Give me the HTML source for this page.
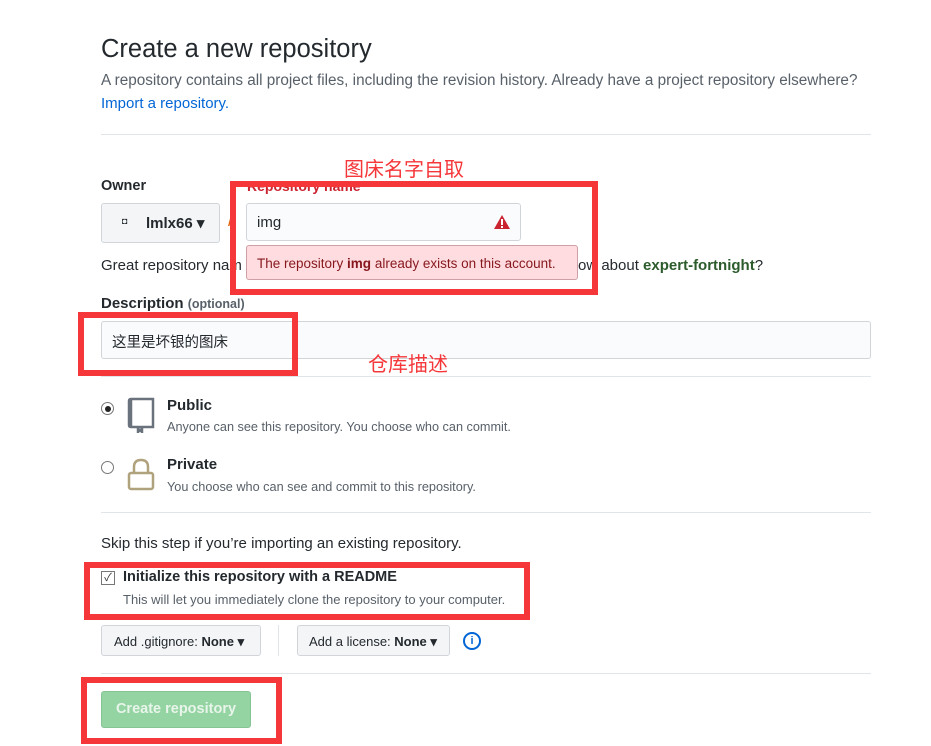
<!DOCTYPE html>
<html><head><meta charset="utf-8"><style>
body{margin:0;width:931px;height:746px;background:#fff;font-family:"Liberation Sans","Noto Sans CJK SC",sans-serif;color:#24292e;position:relative;overflow:hidden}
.a{position:absolute;white-space:nowrap}
.hr{position:absolute;left:101px;width:770px;height:1px;background:#e1e4e8}
.rb{position:absolute;border:6px solid #f5373a;box-sizing:border-box}
.btn{position:absolute;background:#f3f5f7;border:1px solid #d1d5da;border-radius:3px;box-sizing:border-box;font-size:13px;color:#24292e}
.red{color:#f5373a;font-size:20px}
</style></head><body>
<div class="a" style="left:101px;top:35px;font-size:25.5px;font-weight:300">Create a new repository</div>
<div class="a" style="left:101px;top:72px;font-size:15.3px;color:#586069">A repository contains all project files, including the revision history. Already have a project repository elsewhere?</div>
<div class="a" style="left:101px;top:95px;font-size:15px;color:#0366d6">Import a repository.</div>
<div class="hr" style="top:134px"></div>
<div class="a red" style="left:344px;top:153px">图床名字自取</div>
<div class="a" style="left:101px;top:178px;font-size:14.5px;font-weight:bold">Owner</div>
<div class="a" style="left:247px;top:178px;font-size:14px;font-weight:bold;color:#cb2431">Repository name</div>
<div class="btn" style="left:101px;top:203px;width:119px;height:40px"><span class="a" style="left:20px;top:12px;font-size:9px">◘</span><span class="a" style="left:44px;top:10px;font-size:15px;font-weight:bold">lmlx66 ▾</span></div>
<div class="a" style="left:228px;top:210px;font-size:18px;color:#e36209">/</div>
<div style="position:absolute;left:246px;top:203px;width:275px;height:38px;border:1px solid #d1d5da;border-radius:3px;background:#fafbfc;box-sizing:border-box"><span class="a" style="left:10px;top:10px;font-size:15px">img</span>
<svg class="a" style="left:246px;top:10px" width="18" height="16" viewBox="0 0 18 16"><path d="M9 1L17 15H1Z" fill="#cb2431"/><rect x="8" y="5" width="2" height="6" fill="#fff"/><rect x="8" y="12" width="2" height="2" fill="#fff"/></svg></div>
<div class="a" style="left:101px;top:257px;font-size:15px">Great repository nam</div>
<div class="a" style="left:578px;top:257px;font-size:15px">ow about <b style="color:#2c5b2c">expert-fortnight</b>?</div>
<div style="position:absolute;left:246px;top:245px;width:332px;height:35px;background:#ffdce0;border:1px solid #cea0a5;border-radius:3px;box-sizing:border-box"><span class="a" style="left:10px;top:10px;font-size:13.5px;color:#86181d">The repository <b>img</b> already exists on this account.</span></div>
<div class="a" style="left:101px;top:295px;font-size:15px;font-weight:bold">Description <span style="font-size:12.5px;color:#586069">(optional)</span></div>
<div style="position:absolute;left:101px;top:321px;width:770px;height:38px;border:1px solid #d1d5da;border-radius:3px;background:#fafbfc;box-sizing:border-box"><span class="a" style="left:10px;top:9px;font-size:14.5px">这里是坏银的图床</span></div>
<div class="a red" style="left:368px;top:348px">仓库描述</div>
<div class="hr" style="top:376px"></div>
<div class="a" style="left:101px;top:402px;width:13px;height:13px;border:1px solid #777;border-radius:50%;box-sizing:border-box"><div style="margin:2.5px;width:6px;height:6px;border-radius:50%;background:#222"></div></div>
<svg class="a" style="left:127px;top:397px" width="28" height="36" viewBox="0 0 28 36"><path d="M4 2H26V30H4M4 2V30M4 30Q2 30 2 28V4Q2 2 4 2M11 30V35L13 33L15 35V30M17 30H26" fill="none" stroke="#6a737d" stroke-width="2.5"/></svg>
<div class="a" style="left:167px;top:397px;font-size:15px;font-weight:bold">Public</div>
<div class="a" style="left:167px;top:420px;font-size:12.7px;color:#586069">Anyone can see this repository. You choose who can commit.</div>
<div class="a" style="left:101px;top:461px;width:13px;height:13px;border:1px solid #777;border-radius:50%;box-sizing:border-box"></div>
<svg class="a" style="left:127px;top:457px" width="28" height="34" viewBox="0 0 28 34"><path d="M7 16V10Q7 3 14 3Q21 3 21 10V16" fill="none" stroke="#b0a27c" stroke-width="2.5"/><rect x="2" y="16" width="24" height="16" rx="2" fill="none" stroke="#b0a27c" stroke-width="2.5"/></svg>
<div class="a" style="left:167px;top:456px;font-size:15px;font-weight:bold">Private</div>
<div class="a" style="left:167px;top:480px;font-size:12.7px;color:#586069">You choose who can see and commit to this repository.</div>
<div class="hr" style="top:512px"></div>
<div class="a" style="left:101px;top:535px;font-size:15px">Skip this step if you’re importing an existing repository.</div>
<div class="a" style="left:101px;top:571px;width:14px;height:14px;border:1px solid #777;box-sizing:border-box;font-size:11px;line-height:12px;text-align:center;color:#333">✓</div>
<div class="a" style="left:123px;top:569px;font-size:14.5px;font-weight:bold">Initialize this repository with a README</div>
<div class="a" style="left:123px;top:592px;font-size:13px;color:#586069">This will let you immediately clone the repository to your computer.</div>
<div class="btn" style="left:101px;top:625px;width:160px;height:31px"><span class="a" style="left:12px;top:8px">Add .gitignore: <b>None ▾</b></span></div>
<div class="a" style="left:278px;top:625px;width:1px;height:31px;background:#e1e4e8"></div>
<div class="btn" style="left:297px;top:625px;width:153px;height:31px"><span class="a" style="left:11px;top:8px">Add a license: <b>None ▾</b></span></div>
<div class="a" style="left:463px;top:632px;width:18px;height:18px;border:2px solid #0366d6;border-radius:50%;box-sizing:border-box;color:#0366d6;font-size:11px;font-weight:bold;text-align:center;line-height:14px">i</div>
<div class="hr" style="top:673px"></div>
<div class="a" style="left:101px;top:691px;width:150px;height:37px;background:#94d3a2;border:1px solid #86c494;border-radius:3px;box-sizing:border-box;color:#e8f5ea;font-size:14.5px;font-weight:bold;text-align:center;line-height:35px">Create repository</div>
<div class="rb" style="left:230px;top:181px;width:368px;height:114px"></div>
<div class="rb" style="left:78px;top:312px;width:220px;height:64px"></div>
<div class="rb" style="left:84px;top:562px;width:446px;height:58px"></div>
<div class="rb" style="left:81px;top:677px;width:201px;height:67px"></div>
</body></html>
